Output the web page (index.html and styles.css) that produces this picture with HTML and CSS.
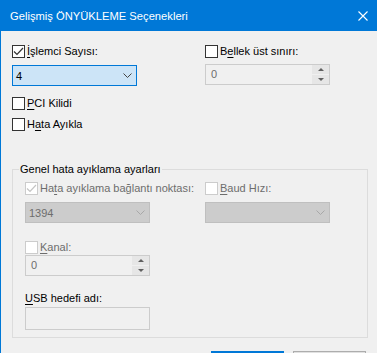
FILE: index.html
```html
<!DOCTYPE html>
<html lang="tr">
<head>
    <meta charset="UTF-8">
    <title>Gelişmiş ÖNYÜKLEME Seçenekleri</title>
    <link rel="stylesheet" href="styles.css">
</head>
<body>
    <div class="dialog">
        <header class="titlebar">
            <span class="title">Gelişmiş ÖNYÜKLEME Seçenekleri</span>
            <svg class="close" width="10" height="10" viewBox="0 0 10 10">
                <path d="M0.5 0.5 L9.5 9.5 M9.5 0.5 L0.5 9.5" stroke="#fff" stroke-width="1.1" fill="none"/>
            </svg>
        </header>

        <main class="content">
            <div class="top-grid">
                <div class="col">
                    <div class="check">
                        <span class="box"><svg width="11" height="11" viewBox="0 0 11 11"><path d="M1 5.5 L4 8.5 L10 2" stroke="#333" stroke-width="1.2" fill="none"/></svg></span>
                        <span><u>İ</u>şlemci Sayısı:</span>
                    </div>
                    <div class="select focused">
                        <span>4</span>
                        <svg width="9" height="5" viewBox="0 0 9 5"><path d="M0.5 0.5 L4.5 4.5 L8.5 0.5" stroke="#444" fill="none"/></svg>
                    </div>
                </div>
                <div class="col">
                    <div class="check">
                        <span class="box"></span>
                        <span>B<u>e</u>llek üst sınırı:</span>
                    </div>
                    <div class="spin disabled spin-top">
                        <span class="spin-value">0</span>
                        <div class="spin-btns">
                            <span class="spin-btn"><i class="arrow up"></i></span>
                            <span class="spin-btn"><i class="arrow down"></i></span>
                        </div>
                    </div>
                </div>
            </div>

            <div class="check pci">
                <span class="box"></span>
                <span><u>P</u>CI Kilidi</span>
            </div>
            <div class="check debug">
                <span class="box"></span>
                <span>H<u>a</u>ta Ayıkla</span>
            </div>

            <fieldset class="group">
                <legend>Genel hata ayıklama ayarları</legend>
                <div class="group-grid">
                    <div class="col">
                        <div class="check off">
                            <span class="box"><svg width="11" height="11" viewBox="0 0 11 11"><path d="M1 5.5 L4 8.5 L10 2" stroke="#c4c4c4" stroke-width="1.2" fill="none"/></svg></span>
                            <span>Ha<u>t</u>a ayıklama bağlantı noktası:</span>
                        </div>
                        <div class="select disabled">
                            <span>1394</span>
                            <svg width="9" height="5" viewBox="0 0 9 5"><path d="M0.5 0.5 L4.5 4.5 L8.5 0.5" stroke="#a8a8a8" fill="none"/></svg>
                        </div>
                        <div class="check off kanal">
                            <span class="box"></span>
                            <span><u>K</u>anal:</span>
                        </div>
                        <div class="spin disabled">
                            <span class="spin-value">0</span>
                            <div class="spin-btns">
                                <span class="spin-btn"><i class="arrow up"></i></span>
                                <span class="spin-btn"><i class="arrow down"></i></span>
                            </div>
                        </div>
                        <div class="field-label"><u>U</u>SB hedefi adı:</div>
                        <div class="textbox"></div>
                    </div>
                    <div class="col">
                        <div class="check off">
                            <span class="box"></span>
                            <span><u>B</u>aud Hızı:</span>
                        </div>
                        <div class="select disabled">
                            <span></span>
                            <svg width="9" height="5" viewBox="0 0 9 5"><path d="M0.5 0.5 L4.5 4.5 L8.5 0.5" stroke="#a8a8a8" fill="none"/></svg>
                        </div>
                    </div>
                </div>
            </fieldset>

            <footer class="buttons">
                <button class="btn primary" aria-label="Tamam"></button>
                <button class="btn" aria-label="İptal"></button>
            </footer>
        </main>
    </div>
</body>
</html>
```

FILE: styles.css
```css
:root {
    --blue: #0078d7;
    --bg: #f0f0f0;
    --text: #000;
    --muted: #6d6d6d;
    --line: #dcdcdc;
}
* { box-sizing: border-box; }
html, body { margin: 0; height: 100%; overflow: hidden; }
body { background: var(--bg); color: var(--text); font-family: "Liberation Sans", Arial, sans-serif; font-size: 11px; }
u { text-decoration-thickness: 1px; text-underline-offset: 2px; }

.dialog { border-left: 1px solid var(--blue); min-height: 100%; }
.titlebar { height: 31px; background: var(--blue); color: #fff; display: flex; align-items: center; justify-content: space-between; padding: 0 9px 0 9px; }
.title { font-size: 11.2px; }

.content { padding: 13px 9px 0 11px; }
.top-grid { display: grid; grid-template-columns: 193px 125px; }
.col { display: flex; flex-direction: column; align-items: flex-start; }

/* Casillas */
.check { display: flex; align-items: center; gap: 2px; height: 15px; line-height: 15px; white-space: nowrap; }
.box { width: 13px; height: 13px; border: 1px solid #333; background: #fff; display: flex; align-items: center; justify-content: center; }
.check.off { color: var(--muted); }
.check.off .box { border-color: #cccccc; }
.pci { margin-top: 10px; }
.debug { margin-top: 6px; }

/* Listas y campos */
.select { width: 125px; height: 21px; margin-top: 6px; display: flex; align-items: center; justify-content: space-between; padding: 0 4px 0 3px; border: 1px solid #adadad; }
.select.focused { background: #cce4f7; border-color: var(--blue); }
.select.disabled { background: #cccccc; border-color: #bfbfbf; color: var(--muted); }

.spin { width: 125px; height: 21px; margin-top: 6px; display: flex; border: 1px solid #cccccc; background: var(--bg); }
.spin-top { margin-top: 5px; }
.spin-value { flex: 1; padding-left: 5px; line-height: 19px; color: var(--muted); }
.spin-btns { width: 17px; display: flex; flex-direction: column; gap: 1px; }
.spin-btn { flex: 1; background: #e6e6e6; display: flex; align-items: center; justify-content: center; }
.arrow { width: 0; height: 0; border-left: 3px solid transparent; border-right: 3px solid transparent; }
.arrow.up { border-bottom: 3px solid #606060; }
.arrow.down { border-top: 3px solid #606060; }

.textbox { width: 125px; height: 23px; margin-top: 1px; border: 1px solid #cccccc; background: var(--bg); }
.field-label { margin-top: 15px; line-height: 15px; }

/* Grupo */
.group { margin: 30px 0 0 0; padding: 4px 12px 7px 12px; border: 1px solid var(--line); min-width: 0; }
.group legend { margin-left: -6px; padding: 0 1px; line-height: 15px; }
.group-grid { display: grid; grid-template-columns: 180px 125px; }
.kanal { margin-top: 17px; }
.kanal + .spin { margin-top: 0; }

/* Botones */
.buttons { display: flex; justify-content: flex-end; gap: 9px; margin-top: 13px; padding-right: 2px; }
.btn { font: inherit; width: 73px; height: 23px; padding: 0; background: #e1e1e1; border: 1px solid #adadad; }
.btn.primary { border: 2px solid var(--blue); }
```
